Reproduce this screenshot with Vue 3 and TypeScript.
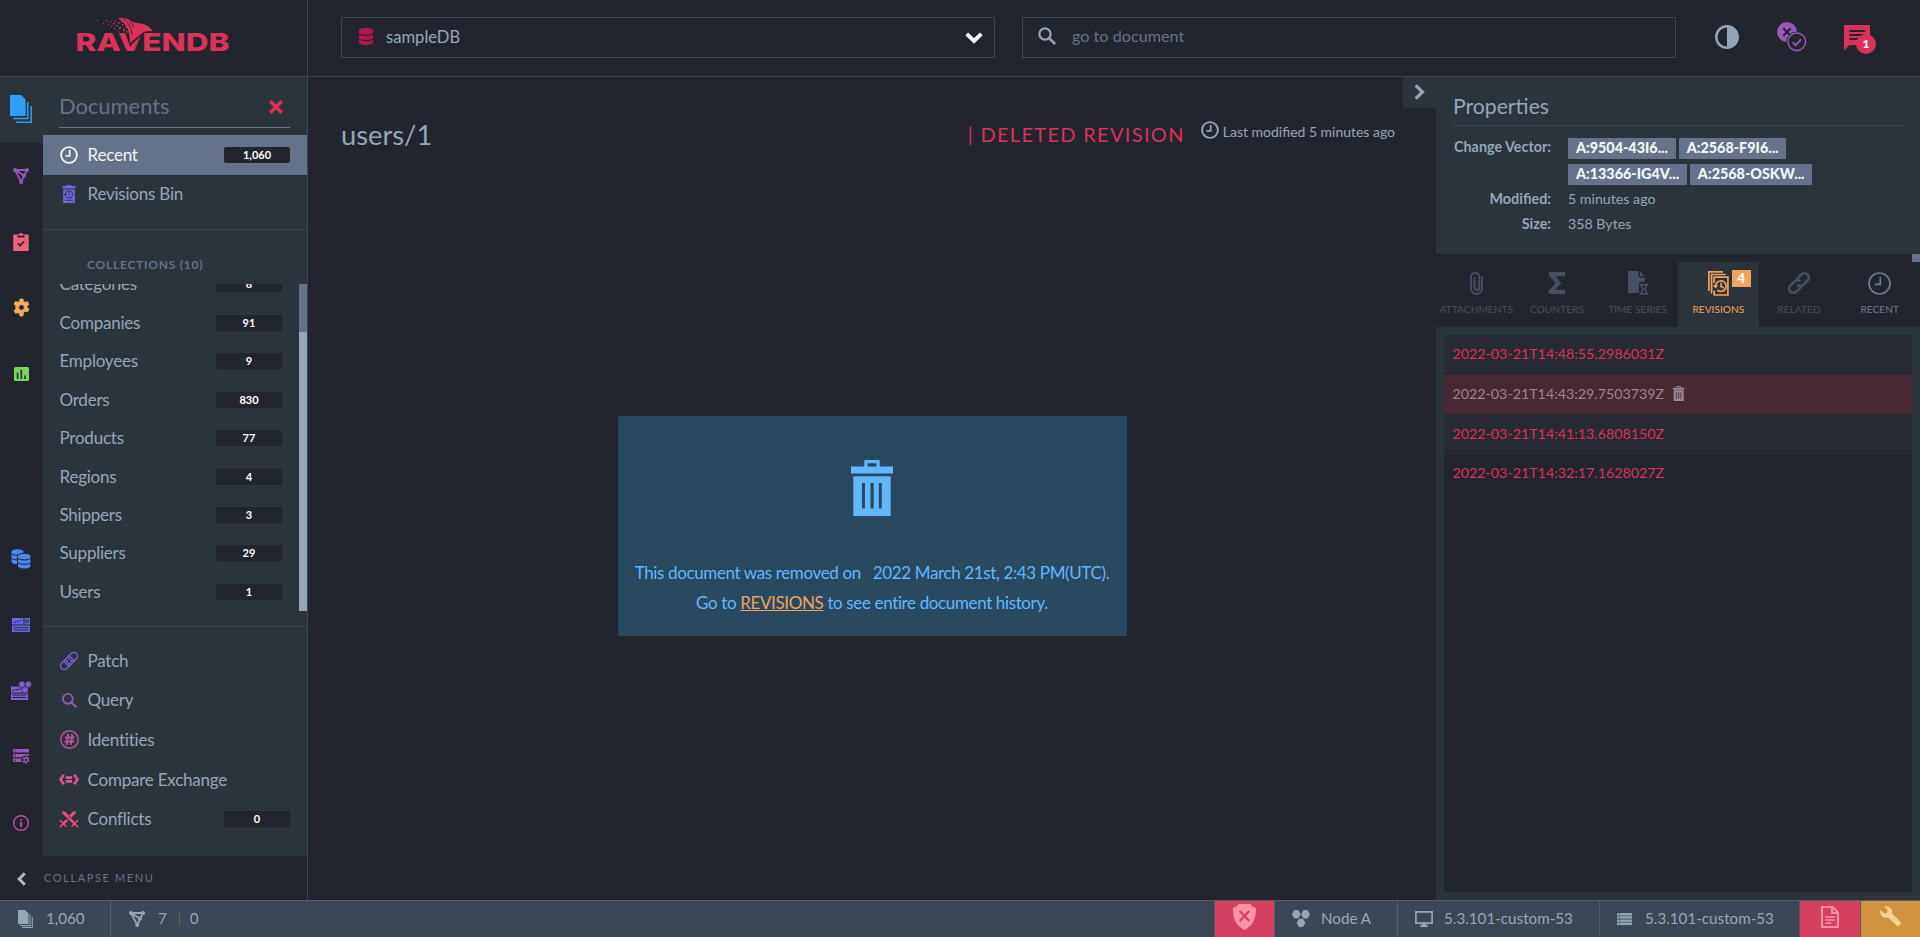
<script setup lang="ts">
import { h, type FunctionalComponent } from 'vue'

interface Glyph {
  w: number
  h: number
  body: string
}

const DARK = '#22252d'
const PANEL = '#2c343b'

const gearPath =
  'M7 0h3l.5 2.4 1.6.9 2.3-.8 1.6 2.7-1.8 1.6v1.9l1.8 1.6-1.6 2.7-2.3-.8-1.6.9L10 17H7l-.5-2.4-1.6-.9-2.3.8L1 11.800l1.800-1.600V6.800L1 5.200l1.600-2.700 2.300.8 1.600-.9zM8.500 5.700a2.800 2.800 0 1 0 0 5.600 2.800 2.800 0 0 0 0-5.600z'

const glyphs: Record<string, Glyph> = {
  docs: {
    w: 22, h: 28,
    body: '<path d="M0 0h11l4.600 4.600V21H0z"/><path fill="none" stroke="currentColor" stroke-width="1.500" d="M17.700 7v16.600H3.300M21.200 11v16.200H6.300"/>',
  },
  docsSmall: {
    w: 16, h: 18,
    body: '<path d="M1 0h7l3.500 3.500V14H1z"/><path fill="none" stroke="currentColor" stroke-width="1.100" d="M13 4.500v11H3M15.300 7v10.400H5"/>',
  },
  graph: {
    w: 16, h: 16,
    body: '<path fill="none" stroke="currentColor" stroke-width="1.800" d="M2 2h12L8.200 14zM2 2l9 5.500"/><circle cx="2" cy="2.100" r="2"/><circle cx="14" cy="2.100" r="2"/><circle cx="10.900" cy="7.500" r="2"/><circle cx="8.200" cy="13.900" r="2"/>',
  },
  clipboard: {
    w: 16, h: 18,
    body: `<path d="M.300 1.500h5A2.800 2.800 0 0 1 8 0a2.800 2.800 0 0 1 2.700 1.500h5V18H.300z"/><path fill="${DARK}" d="M4.500 2.500h7v2h-7z"/><path fill="none" stroke="${DARK}" stroke-width="1.600" d="M4.700 10.200l2.400 2.400 4.200-4.400"/><circle cx="8" cy="1.900" r="1"/>`,
  },
  gear: { w: 17, h: 17, body: `<path fill-rule="evenodd" stroke="currentColor" stroke-width=".800" d="${gearPath}"/>` },
  chart: {
    w: 15, h: 14,
    body: `<rect width="15" height="14" rx="1.500"/><path stroke="${PANEL}" stroke-width="1.700" d="M3.600 5.500V12M7.300 2.800V12M11 8.500V12"/>`,
  },
  databases: {
    w: 20, h: 20,
    body: `<path d="M.500 3C.500-.700 12.500-.700 12.500 3v9.500C12.500 16 .500 16 .500 12.500z"/><path fill="none" stroke="${DARK}" stroke-width="1" d="M.500 4.800c3 2 9 2 12 0M.500 9.300c3 2 9 2 12 0"/><path stroke="${DARK}" d="M6.500 7.500c0-4.400 13.500-4.400 13.500 0V17c0 4-13.500 4-13.500 0z"/><path fill="none" stroke="${DARK}" stroke-width="1" d="M6.500 9.400c3 2 10 2 13.500 0M6.500 13.800c3 2 10 2 13.500 0"/>`,
  },
  storage: {
    w: 18, h: 14,
    body: `<path d="M0 0h11.500v6.500H0zM12.500 0H18v6.500h-5.500zM0 7.600h18V14H0z"/><path fill="none" stroke="${DARK}" stroke-width=".900" d="M1.500 4.800l3-1.500 2 .7L10 1.500M1.500 9.700h15M1.500 12h15"/><circle cx="15.200" cy="3.200" r="1.500" fill="none" stroke="${DARK}"/>`,
  },
  cluster: {
    w: 21, h: 19,
    body: `<path d="M0 5.500h17V19H0z"/><path fill="none" stroke="${DARK}" stroke-width="1" d="M1 10l4-1.500 2 .5 3-1.700M0 12h17M1.500 14h14M1.500 16.500h14"/><g stroke="${DARK}" stroke-width=".700"><circle cx="11" cy="3.400" r="3.300"/><circle cx="17.300" cy="3.400" r="3.300"/><circle cx="14.100" cy="9" r="3.300"/></g>`,
  },
  serverGear: {
    w: 17, h: 15,
    body: `<path d="M0 0h16v3.500H0zM0 5h16v3.200H0zM0 9.600h9.500V13H0z"/><path fill="${DARK}" d="M1.500 1.200h1.200v1.200H1.500zM1.500 6h1.200v1.200H1.500zM1.500 10.700h1.200v1.200H1.500z"/><circle cx="13" cy="11" r="4.600" fill="${DARK}"/><g transform="translate(9.200 7.200) scale(.45)"><path fill-rule="evenodd" d="${gearPath}"/></g>`,
  },
  info: {
    w: 16, h: 16,
    body: '<circle cx="8" cy="8" r="7.300" fill="none" stroke="currentColor" stroke-width="1.400"/><path d="M7.100 7h1.800v5H7.100zM7.100 4h1.800v1.800H7.100z"/>',
  },
  close: { w: 14, h: 14, body: '<path fill="none" stroke="currentColor" stroke-width="3.600" d="M1.300 1.300l11.400 11.400M12.700 1.300L1.300 12.700"/>' },
  clock: {
    w: 18, h: 18,
    body: '<circle cx="9" cy="9" r="7.900" fill="none" stroke="currentColor" stroke-width="1.900"/><path fill="none" stroke="currentColor" stroke-width="1.700" d="M9.700 4v5.800H5.500"/>',
  },
  clockThin: {
    w: 23, h: 23,
    body: '<circle cx="11.500" cy="11.500" r="10.500" fill="none" stroke="currentColor" stroke-width="1.700"/><path fill="none" stroke="currentColor" stroke-width="1.700" d="M12.300 5v7.300H7"/>',
  },
  bin: {
    w: 14, h: 18,
    body: `<path d="M4.500 0h5v1h4v2.500H.500V1h4zM1.200 4.500h11.600V18H1.200z"/><circle cx="7" cy="9.500" r="3.700" fill="none" stroke="${PANEL}"/><path fill="none" stroke="${PANEL}" stroke-width=".900" d="M7 7.300v2.400l1.500 1M1.500 9.500h3M3 15.300h8"/>`,
  },
  patch: {
    w: 20, h: 20,
    body: '<g transform="rotate(-45 10 10)"><rect x="-.500" y="6.300" width="21" height="7.400" rx="3.700" fill="none" stroke="currentColor" stroke-width="1.400"/><path fill="none" stroke="currentColor" stroke-width="1.300" d="M6.300 6.300v7.400M13.700 6.300v7.400"/><path d="M7.300 7.600h2v2h-2zM10.700 7.600h2v2h-2zM7.300 10.700h2v2h-2zM10.700 10.700h2v2h-2z"/></g>',
  },
  search: {
    w: 18, h: 18,
    body: '<circle cx="7" cy="7" r="5.600" fill="none" stroke="currentColor" stroke-width="2.200"/><path stroke="currentColor" stroke-width="2.500" d="M11 11l6.200 6.200"/>',
  },
  query: {
    w: 15, h: 15,
    body: '<circle cx="5.800" cy="5.800" r="4.900" fill="none" stroke="currentColor" stroke-width="1.900"/><path stroke="currentColor" stroke-width="2.300" d="M9.300 9.300l5 5"/>',
  },
  hash: {
    w: 19, h: 19,
    body: '<circle cx="9.500" cy="9.500" r="8.700" fill="none" stroke="currentColor" stroke-width="1.500"/><path fill="none" stroke="currentColor" stroke-width="1.900" d="M8.200 4L6.700 15M12.300 4l-1.500 11M5 7.500h9.500M4.500 11.500H14"/>',
  },
  exchange: {
    w: 20, h: 11,
    body: '<path fill="none" stroke="currentColor" stroke-width="2.600" d="M4.800.800L1.500 5.500l3.300 4.700M15.200.800l3.300 4.700-3.300 4.700M6.800 3.600h6.400M6.800 7.400h6.400"/>',
  },
  swords: {
    w: 20, h: 17,
    body: '<path d="M3 0l3.200.800L16.500 12l-1.500 1.500L3.800 3zM17 0l-3.200.800L9.300 5.600l2 2L16.200 3zM7.200 8l-3.700 4L5 13.500 9 10z"/><path fill="none" stroke="currentColor" stroke-width="1.600" d="M1 9.300l6.500 6.500M19 9.300l-6.500 6.500M5 12L.800 16.300M15 12l4.200 4.300"/>',
  },
  left: { w: 9, h: 14, body: '<path fill="none" stroke="currentColor" stroke-width="3" d="M7.800 1.200L2.200 7l5.600 5.800"/>' },
  right: { w: 11, h: 16, body: '<path fill="none" stroke="currentColor" stroke-width="3.200" d="M1.700 1.300L8.500 8l-6.800 6.700"/>' },
  down: { w: 18, h: 12, body: '<path fill="none" stroke="currentColor" stroke-width="4" d="M1.700 1.800L9 9l7.300-7.200"/>' },
  database: {
    w: 14, h: 17,
    body: `<path d="M0 2.800C0-.900 14-.900 14 2.800v11.400c0 3.700-14 3.700-14 0z"/><path fill="none" stroke="${DARK}" stroke-width="1.100" d="M0 6c3 1.800 11 1.800 14 0M0 11.300c3 1.800 11 1.800 14 0"/>`,
  },
  contrast: {
    w: 24, h: 24,
    body: '<circle cx="12" cy="12" r="10.700" fill="none" stroke="currentColor" stroke-width="2.400"/><path d="M12 2a10 10 0 0 1 0 20z"/>',
  },
  status: {
    w: 30, h: 30,
    body: `<circle cx="10" cy="10" r="10"/><path fill="none" stroke="${DARK}" stroke-width="2" d="M6.300 6.300l7.400 7.400M13.700 6.300l-7.400 7.400"/><circle cx="19.800" cy="19.800" r="10.400" fill="${DARK}"/><circle cx="19.800" cy="19.800" r="8.800" fill="none" stroke="currentColor" stroke-width="1.500"/><path fill="none" stroke="currentColor" stroke-width="1.800" d="M15.600 20.200l3 3 5.400-5.800"/>`,
  },
  message: {
    w: 26, h: 26,
    body: `<path d="M0 0h26v20H5.500L0 25.500z"/><path stroke="${DARK}" stroke-width="2" d="M5.300 6h15.500M5.300 10h15.500M5.300 14h15.500"/>`,
  },
  trash: {
    w: 42, h: 56,
    body: '<path fill-rule="evenodd" d="M13.300 0h15.400v6.500H42v7H0v-7h13.300zM16.500 3.300v3.200h9V3.300zM2.300 16.200h37.400V56H2.300zM11 23v25.500h3V23zM19.500 23v25.500h3.200V23zM27.800 23v25.500h3V23z"/>',
  },
  clip: {
    w: 13, h: 24,
    body: '<path fill="none" stroke="currentColor" stroke-width="1.900" d="M12 5v12.500a5.500 5.500 0 0 1-11 0v-12a4.200 4.200 0 0 1 8.300 0v11.200a2.400 2.400 0 0 1-4.800 0V6"/>',
  },
  sigma: { w: 16, h: 22, body: '<path d="M0 0h16v4.200H6.500L12.300 11l-6 6.800H16V22H0v-3.500L6.500 11 0 3.500z"/>' },
  timeseries: {
    w: 20, h: 24,
    body: '<path d="M0 0h10.500v6.500h6.200V11H11v11H0zM12 0l4.700 5H12z"/><path fill="none" stroke="currentColor" stroke-width="1.700" d="M11.700 13.600H20M11.700 22.800H20M13.300 13.800c0 2.500 1.500 3 1.500 4.400s-1.500 2-1.500 4.400M18.500 13.800c0 2.500-1.500 3-1.500 4.400s1.500 2 1.500 4.400"/>',
  },
  revisions: {
    w: 21, h: 25,
    body: '<path fill="none" stroke="currentColor" stroke-width="1.700" d="M.900 20V.900H15M3.600 22.500V3.500H17.700"/><path fill="none" stroke="currentColor" stroke-width="1.700" d="M6.200 12V6.200H19.900V24H6.200v-4.500"/><path fill="none" stroke="currentColor" stroke-width="1.700" d="M7.600 15.500A5.300 5.300 0 1 1 9.300 19M13 11.800v3.600l2.800 1.600"/><path d="M4.700 14.300h5.600l-2.800 3.300z"/>',
  },
  link: {
    w: 22, h: 22,
    body: '<g transform="rotate(-45 11 11)" fill="none" stroke="currentColor" stroke-width="2.600"><path d="M10.500 15.300H3.200a4.300 4.300 0 0 1 0-8.600H9a4.300 4.300 0 0 1 4.300 4.300M11.500 6.700h7.300a4.300 4.300 0 0 1 0 8.600H13A4.300 4.300 0 0 1 8.700 11"/></g>',
  },
  shield: {
    w: 23, h: 26,
    body: '<path d="M5.500 0h12l1.500 2.500 4 1.300C23 14 21 21 11.500 26 2 21 0 14 0 3.800l4-1.300z"/><path fill="none" stroke="#d4405f" stroke-width="2" d="M6.700 7l9.600 10M16.300 7L6.700 17"/>',
  },
  node: {
    w: 18, h: 17,
    body: '<path stroke="currentColor" stroke-width="1" d="M2.400.600h3.800l2 3.700-2 3.700H2.400L.400 4.300zM11.600.600h3.800l2 3.700-2 3.700h-3.800l-2-3.700zM7.100 9.200h3.800l2 3.700-2 3.700H7.100l-2-3.700z"/>',
  },
  monitor: {
    w: 18, h: 16,
    body: '<path fill="none" stroke="currentColor" stroke-width="1.700" d="M.900.900h16.200v11.200H.900z"/><path d="M7 12.500h4v1.700h2V16H5v-1.800h2z"/>',
  },
  servers: {
    w: 15, h: 12,
    body: '<path d="M0 0h15v2.400H0zM0 3.200h15v2.400H0zM0 6.400h15v2.400H0zM0 9.600h15V12H0z"/><path stroke="#3c4654" stroke-width="1" d="M2.500 0v12" stroke-dasharray="1 2.200"/>',
  },
  report: {
    w: 18, h: 22,
    body: '<path fill="none" stroke="currentColor" stroke-width="2" d="M1 1h10.500L17 6.500V21H1zM11 1v6h6"/><path fill="none" stroke="currentColor" stroke-width="1.300" d="M4.300 11h9.500M4.300 14h9.500M4.300 17h6"/>',
  },
  wrench: {
    w: 22, h: 21,
    body: '<path d="M4.200.600A6 6 0 0 1 12 7.500l9.300 9.600-3.500 3.500L8.300 11.500A6 6 0 0 1 .500 4.200L4 7.300l3-.5.600-3z"/>',
  },
}

const Icon: FunctionalComponent<{ name: string; scale?: number }> = ({ name, scale = 1 }) => {
  const g = glyphs[name]
  return h('svg', {
    width: g.w * scale,
    height: g.h * scale,
    viewBox: `0 0 ${g.w} ${g.h}`,
    fill: 'currentColor',
    'aria-hidden': 'true',
    innerHTML: g.body,
  })
}
Icon.props = ['name', 'scale']

const railTop = [
  { icon: 'docs', tone: 'sky' },
  { icon: 'graph', tone: 'purple' },
  { icon: 'clipboard', tone: 'coral' },
  { icon: 'gear', tone: 'amber' },
  { icon: 'chart', tone: 'green' },
]
const railBottom = [
  { icon: 'databases', tone: 'blue' },
  { icon: 'storage', tone: 'indigo' },
  { icon: 'cluster', tone: 'violet' },
  { icon: 'serverGear', tone: 'purple' },
  { icon: 'info', tone: 'magenta' },
]

const collections = [
  { name: 'Categories', count: '8' },
  { name: 'Companies', count: '91' },
  { name: 'Employees', count: '9' },
  { name: 'Orders', count: '830' },
  { name: 'Products', count: '77' },
  { name: 'Regions', count: '4' },
  { name: 'Shippers', count: '3' },
  { name: 'Suppliers', count: '29' },
  { name: 'Users', count: '1' },
]

const tools = [
  { name: 'Patch', icon: 'patch', tone: 'violet', count: '' },
  { name: 'Query', icon: 'query', tone: 'purple', count: '' },
  { name: 'Identities', icon: 'hash', tone: 'magenta', count: '' },
  { name: 'Compare Exchange', icon: 'exchange', tone: 'pink', count: '' },
  { name: 'Conflicts', icon: 'swords', tone: 'rose', count: '0' },
]

const vector = ['A:9504-43I6...', 'A:2568-F9I6...', 'A:13366-IG4V...', 'A:2568-OSKW...']

const tabs = [
  { label: 'ATTACHMENTS', icon: 'clip', state: '' },
  { label: 'COUNTERS', icon: 'sigma', state: '' },
  { label: 'TIME SERIES', icon: 'timeseries', state: '' },
  { label: 'REVISIONS', icon: 'revisions', state: 'active', badge: '4' },
  { label: 'RELATED', icon: 'link', state: '' },
  { label: 'RECENT', icon: 'clockThin', state: 'enabled' },
]

const revisions = [
  { stamp: '2022-03-21T14:48:55.2986031Z', selected: false },
  { stamp: '2022-03-21T14:43:29.7503739Z', selected: true },
  { stamp: '2022-03-21T14:41:13.6808150Z', selected: false },
  { stamp: '2022-03-21T14:32:17.1628027Z', selected: false },
]

const specks = [
  [20, 2, 1], [26, 5, 1], [29, 2, 1.2], [33, 3, 1.2], [31, 6, 1], [36, 5, 1.5], [34, 8, 1], [38, 2.500, 1.200],
  [39, 7, 1.500], [41, 4, 1.600], [37, 10, 1.200], [42, 9, 1.800], [45, 6, 1.600], [46, 11, 1.800], [41, 12.500, 1], [48, 8.500, 1.500], [49, 13, 1.500], [44, 3, 1.300],
]
</script>

<template>
  <div class="studio">
    <header class="topbar">
      <div class="brand">
        <svg class="logo" width="156" height="38" viewBox="0 0 156 38" fill="#dc3158">
          <text x="-1.500" y="33" textLength="154" lengthAdjust="spacingAndGlyphs" class="wordmark">RAVENDB</text>
          <path fill="#22252d" d="M49 15l4 13 14-13 6-1H48z" />
          <path d="M41 .500c5-1 9 0 12 1.800 2.500 1.400 5 2.900 9 3 5.500.400 11 3.200 13.500 7.900-5-.7-9 .2-12 3.300l-10.500 8.800c.3-11-3-20-12-24.800z" />
          <path fill="none" stroke="#22252d" stroke-width=".900" d="M46 .500c5.500 4 8.500 9 9 16M52 2.500c2.500 2 4 4 5 7" />
          <rect v-for="([x, y, s], i) in specks" :key="i" :x="x" :y="y" :width="s" :height="s" />
        </svg>
      </div>
      <div class="topbar-main">
        <div class="db-select">
          <Icon name="database" class="db-icon" />
          <span class="db-name">sampleDB</span>
          <Icon name="down" class="caret" />
        </div>
        <div class="search">
          <Icon name="search" />
          <span>go to document</span>
        </div>
        <div class="actions">
          <Icon name="contrast" class="contrast" />
          <Icon name="status" class="tone-purple" />
          <div class="notify">
            <Icon name="message" />
            <span class="notify-count">1</span>
          </div>
        </div>
      </div>
    </header>

    <div class="body">
      <aside class="sidebar">
        <div class="sidebar-top">
          <nav class="rail">
            <div v-for="(r, i) in railTop" :key="r.icon" class="rail-item" :class="['tone-' + r.tone, { active: i === 0 }]">
              <Icon :name="r.icon" />
            </div>
            <div class="rail-gap"></div>
            <div v-for="r in railBottom" :key="r.icon" class="rail-item" :class="'tone-' + r.tone">
              <Icon :name="r.icon" />
            </div>
          </nav>
          <div class="menu">
            <div class="menu-title"><span>Documents</span><Icon name="close" /></div>
            <div class="menu-row selected">
              <span class="menu-icon"><Icon name="clock" /></span>
              <span class="label">Recent</span>
              <span class="count">1,060</span>
            </div>
            <div class="menu-row bin-row">
              <span class="menu-icon tone-indigo"><Icon name="bin" /></span>
              <span class="label">Revisions Bin</span>
            </div>
            <div class="section-title">COLLECTIONS (10)</div>
            <div class="collections">
              <div class="collection-list">
                <div v-for="c in collections" :key="c.name" class="collection">
                  <span class="label">{{ c.name }}</span>
                  <span class="count">{{ c.count }}</span>
                </div>
              </div>
              <div class="scrollbar"><div class="thumb"></div></div>
            </div>
            <div class="tools">
              <div v-for="t in tools" :key="t.name" class="menu-row">
                <span class="menu-icon" :class="'tone-' + t.tone"><Icon :name="t.icon" /></span>
                <span class="label">{{ t.name }}</span>
                <span v-if="t.count" class="count">{{ t.count }}</span>
              </div>
            </div>
          </div>
        </div>
        <div class="collapse"><span class="collapse-icon"><Icon name="left" /></span><span>COLLAPSE MENU</span></div>
      </aside>

      <main class="document">
        <div class="doc-head">
          <h1>users/1</h1>
          <span class="deleted">| DELETED REVISION</span>
          <Icon name="clock" class="mod-icon" />
          <span class="modified">Last modified 5 minutes ago</span>
        </div>
        <div class="stage">
          <div class="alert">
            <Icon name="trash" />
            <p class="first"><span>This document was removed on</span><span>2022 March 21st, 2:43 PM(UTC).</span></p>
            <p>Go to <a>REVISIONS</a> to see entire document history.</p>
          </div>
        </div>
        <div class="toggler"><Icon name="right" /></div>
      </main>

      <section class="side">
        <div class="props">
          <h2>Properties</h2>
          <div class="prop-grid">
            <b>Change Vector:</b>
            <div class="vector"><span v-for="v in vector" :key="v">{{ v }}</span></div>
            <b>Modified:</b>
            <div>5 minutes ago</div>
            <b>Size:</b>
            <div>358 Bytes</div>
          </div>
        </div>
        <div class="tabs">
          <div v-for="t in tabs" :key="t.label" class="tab" :class="t.state">
            <div class="tab-icon">
              <Icon :name="t.icon" />
              <span v-if="t.badge" class="tab-badge">{{ t.badge }}</span>
            </div>
            <span>{{ t.label }}</span>
          </div>
          <div class="tabs-thumb"></div>
        </div>
        <div class="rev-wrap">
          <div class="rev-list">
            <div v-for="r in revisions" :key="r.stamp" class="rev" :class="{ selected: r.selected }">
              <span>{{ r.stamp }}</span>
              <Icon v-if="r.selected" name="trash" :scale="0.27" />
            </div>
          </div>
        </div>
      </section>
    </div>

    <footer class="status">
      <div class="cell docs-cell"><Icon name="docsSmall" /><span>1,060</span></div>
      <div class="cell index-cell"><Icon name="graph" /><span>7</span><i></i><span>0</span></div>
      <div class="cell danger shield-cell"><Icon name="shield" /></div>
      <div class="cell node-cell"><Icon name="node" /><span>Node A</span></div>
      <div class="cell client-cell"><Icon name="monitor" /><span>5.3.101-custom-53</span></div>
      <div class="cell server-cell"><Icon name="servers" /><span>5.3.101-custom-53</span></div>
      <div class="cell danger report-cell"><Icon name="report" /></div>
      <div class="cell warn"><Icon name="wrench" /></div>
    </footer>
  </div>
</template>

<style>
body {
  margin: 0;
  background: #22252d;
}
</style>

<style scoped>
* {
  box-sizing: border-box;
}
svg {
  display: block;
  flex: none;
  overflow: visible;
}
.studio {
  display: flex;
  flex-direction: column;
  width: 1920px;
  height: 937px;
  overflow: hidden;
  background: #22252d;
  color: #96a6b8;
  font-family: Lato, 'Open Sans', sans-serif;
  font-size: 14px;
  white-space: nowrap;
}

.tone-sky { color: #2f9ef4; }
.tone-purple { color: #945ab5; }
.tone-coral { color: #f0627e; }
.tone-amber { color: #f0ad5c; }
.tone-green { color: #7bd560; }
.tone-blue { color: #4b87ee; }
.tone-indigo { color: #6d67e8; }
.tone-violet { color: #7d60d3; }
.tone-magenta { color: #b8529f; }
.tone-pink { color: #dd5596; }
.tone-rose { color: #ec4e7b; }

/* top bar */
.topbar {
  display: flex;
  flex: none;
  height: 77px;
  border-bottom: 1px solid #3c4654;
}
.brand {
  width: 308px;
  border-right: 1px solid #3c4654;
  padding: 18px 0 0 77px;
}
.wordmark {
  font-family: Inter, 'Open Sans', sans-serif;
  font-weight: 800;
  font-size: 25px;
}
.topbar-main {
  display: flex;
  flex: 1;
  align-items: flex-start;
  padding: 17px 0 0 33px;
}
.db-select,
.search {
  display: flex;
  align-items: center;
  width: 654px;
  height: 41px;
  border: 1px solid #3c4654;
}
.db-select {
  padding: 0 11px 0 17px;
  font-size: 16.6px;
}
.db-icon {
  color: #b5164f;
  margin-top: -3px;
}
.db-name {
  flex: 1;
  margin-left: 13px;
  margin-top: -2px;
}
.caret {
  color: #f2f5f8;
  margin-top: 1px;
}
.search {
  margin-left: 27px;
  padding-left: 15px;
  font-size: 16.200px;
}
.search svg {
  margin-top: -3px;
}
.search span {
  margin: -5px 0 0 16px;
  color: #66728a;
}
.actions {
  display: flex;
  align-items: flex-start;
  margin-left: 39px;
}
.contrast {
  margin-top: 8px;
  margin-right: 38px;
}
.actions > .tone-purple {
  margin-top: 5px;
  margin-right: 37px;
}
.notify {
  position: relative;
  margin-top: 8px;
  color: #dc3158;
}
.notify-count {
  position: absolute;
  left: 12px;
  top: 9px;
  width: 20px;
  height: 20px;
  border-radius: 50%;
  background: #dc3158;
  color: #fff;
  font-size: 12px;
  font-weight: 900;
  line-height: 19px;
  text-align: center;
}

.body {
  display: flex;
  flex: 1;
  min-height: 0;
}

/* sidebar */
.sidebar {
  display: flex;
  flex-direction: column;
  width: 308px;
  border-right: 1px solid #3c4654;
}
.sidebar-top {
  display: flex;
  height: 779px;
}
.rail {
  display: flex;
  flex-direction: column;
  width: 43px;
}
.rail-item {
  display: flex;
  align-items: center;
  justify-content: center;
  height: 66px;
  padding: 0 1px 1px 0;
}
.rail-item.active {
  background: #2c343b;
  padding: 0 2px 2px 0;
}
.rail-gap {
  flex: 1;
}
.menu {
  flex: 1;
  background: #2c343b;
}
.menu-title {
  display: flex;
  align-items: center;
  justify-content: space-between;
  height: 51px;
  margin: 0 17px 7px 16px;
  padding: 9px 7px 0 0;
  border-bottom: 1px solid #66728a;
  font-size: 21.9px;
  line-height: 24px;
  color: #66728a;
}
.menu-title span {
  margin-top: -2px;
}
.menu-title svg {
  color: #dc3158;
}
.menu-row {
  display: flex;
  align-items: center;
  height: 39.600px;
  padding: 0 17px 0 16px;
}
.menu-icon {
  display: flex;
  justify-content: center;
  width: 20px;
  margin-right: 8.500px;
}
.label {
  flex: 1;
  font-size: 17px;
  letter-spacing: -0.220px;
  line-height: 24px;
  margin-top: -1px;
}
.count {
  width: 66px;
  height: 16px;
  border-radius: 2px;
  background: #22252d;
  color: #fff;
  font-size: 11px;
  font-weight: 700;
  line-height: 16px;
  text-align: center;
}
.menu-row.selected {
  height: 40px;
  background: #66728a;
  color: #f0f3f7;
}
.bin-row {
  height: 55px;
  padding-bottom: 16px;
  border-bottom: 1px solid #3c4654;
}
.section-title {
  height: 54px;
  padding: 27px 0 0 44px;
  font-size: 12px;
  font-weight: 700;
  line-height: 15px;
  letter-spacing: 0.750px;
  color: #66728a;
}
.collections {
  display: flex;
  height: 327px;
  overflow: hidden;
}
.collection-list {
  display: flex;
  flex: 1;
  flex-direction: column;
  justify-content: flex-end;
}
.collection {
  display: flex;
  flex: none;
  align-items: center;
  height: 38.430px;
  padding: 0 17px 0 16.500px;
}
.collection .label {
  margin-top: 0;
}
.scrollbar {
  width: 8px;
  background: #96a6b8;
}
.thumb {
  height: 48px;
  background: #66728a;
}
.tools {
  height: 229px;
  margin-top: 15px;
  padding-top: 14px;
  border-top: 1px solid #3c4654;
}
.tools .label {
  margin-top: 0;
}
.collapse {
  display: flex;
  align-items: center;
  height: 44px;
  padding-top: 1px;
  font-size: 11px;
  letter-spacing: 1.600px;
  color: #66728a;
}
.collapse-icon {
  display: flex;
  width: 44px;
  padding-left: 17px;
  color: #a9b8c7;
}
.collapse span:last-child {
  margin-top: -3px;
}

/* document */
.document {
  position: relative;
  display: flex;
  flex-direction: column;
  width: 1128px;
}
.doc-head {
  display: flex;
  align-items: flex-start;
  height: 80px;
  padding: 40px 41px 0 33px;
}
.doc-head h1 {
  flex: 1;
  margin: 1px 0 0;
  font-size: 27.300px;
  font-weight: 400;
  line-height: 34px;
}
.deleted {
  margin: 3px 16px 0 0;
  font-size: 20px;
  letter-spacing: 1.320px;
  line-height: 28px;
  color: #dc3158;
}
.mod-icon {
  margin: 4px 4px 0 0;
}
.modified {
  margin-top: 5px;
  font-size: 13.980px;
  line-height: 20px;
}
.stage {
  display: flex;
  justify-content: center;
  padding: 259px 0 0 1px;
}
.alert {
  display: flex;
  flex-direction: column;
  align-items: center;
  width: 509px;
  height: 220px;
  border: 1px solid #2d4557;
  background: #294961;
  padding: 43px 1px 0 0;
  color: #62b7fb;
  font-size: 17px;
  letter-spacing: -0.370px;
  line-height: 30px;
}
.alert p {
  margin: 0;
}
.alert .first {
  display: flex;
  gap: 12px;
  margin-top: 42px;
}
.alert a {
  color: #f0a35e;
  text-decoration: underline;
}
.toggler {
  position: absolute;
  top: 0;
  right: 0;
  display: flex;
  width: 33px;
  height: 31px;
  padding: 7px 0 0 11px;
  background: #2c343b;
}

/* right column */
.side {
  display: flex;
  flex-direction: column;
  width: 484px;
}
.props {
  height: 177px;
  padding: 11px 16px 0 17px;
  background: #2c343b;
}
.props h2 {
  height: 38px;
  margin: 0;
  border-bottom: 1px solid #3c4654;
  font-size: 21.200px;
  font-weight: 400;
  line-height: 36px;
}
.prop-grid {
  display: grid;
  grid-template-columns: 98px 1fr;
  column-gap: 17px;
  padding-top: 12px;
  font-size: 14.200px;
  line-height: 25px;
}
.prop-grid b {
  height: 25px;
  font-size: 14.350px;
  line-height: 18px;
  text-align: right;
}
.prop-grid > div:not(.vector) {
  line-height: 18px;
}
.vector {
  display: flex;
  flex-wrap: wrap;
  align-content: flex-start;
  gap: 5px 3px;
  width: 250px;
  height: 52px;
}
.vector span {
  height: 21px;
  padding: 0 7.900px;
  border-radius: 1px;
  background: #66728a;
  color: #f4f7fa;
  font-size: 14.350px;
  font-weight: 900;
  line-height: 20px;
}
.tabs {
  position: relative;
  display: flex;
  height: 73px;
  padding-top: 8px;
}
.tabs-thumb {
  position: absolute;
  top: 0;
  right: 0;
  width: 8px;
  height: 8px;
  background: #66728a;
}
.tab {
  display: flex;
  flex: 1;
  flex-direction: column;
  align-items: center;
  color: #465060;
  font-size: 10.200px;
  line-height: 12px;
}
.tab.enabled {
  color: #6c7991;
}
.tab.active {
  background: #2c343b;
  color: #f0a35e;
}
.tab-icon {
  position: relative;
  display: flex;
  align-items: center;
  height: 24px;
  margin: 9px 0 8px;
}
.tab-badge {
  position: absolute;
  left: 24px;
  top: -1px;
  width: 19px;
  height: 17px;
  background: #f0a35e;
  color: #fff;
  font-size: 13px;
  font-weight: 900;
  line-height: 17px;
  text-align: center;
}
.rev-wrap {
  flex: 1;
  padding: 8px;
  background: #2c343b;
}
.rev-list {
  height: 100%;
  background: #22252d;
}
.rev {
  display: flex;
  align-items: center;
  gap: 9px;
  height: 39.700px;
  padding: 0 9px 2px 8.500px;
  color: #dc3158;
  font-size: 14.260px;
}
.rev:nth-child(odd) {
  background: #272a32;
}
.rev.selected {
  background: #472833;
  color: #9b8591;
}

/* status bar */
.status {
  display: flex;
  flex: none;
  height: 37px;
  border-top: 1px solid #545d6a;
  background: #3c4654;
  font-size: 15.200px;
}
.cell {
  display: flex;
  align-items: center;
  padding-bottom: 1px;
  border-right: 1px solid #545d6a;
}
.cell span {
  margin-top: -1px;
}
.docs-cell {
  width: 111px;
  padding-left: 17px;
  gap: 13px;
}
.index-cell {
  flex: 1;
  padding-left: 18px;
}
.index-cell span:first-of-type {
  margin-left: 13px;
}
.index-cell i {
  width: 1px;
  height: 14px;
  margin: 0 10px 0 12px;
  background: #59636f;
}
.danger {
  justify-content: center;
  background: #d4405f;
  color: #ff91a8;
}
.shield-cell {
  width: 60px;
  padding-bottom: 5px;
}
.node-cell {
  width: 123px;
  padding-left: 17px;
  gap: 11px;
}
.client-cell {
  width: 202px;
  padding-left: 17px;
  gap: 11px;
}
.server-cell {
  width: 200px;
  padding-left: 17px;
  gap: 13px;
}
.report-cell {
  width: 61px;
  padding-bottom: 5px;
}
.warn {
  justify-content: center;
  width: 59px;
  padding-bottom: 5px;
  border-right: 0;
  background: #d1923f;
  color: #ffd294;
}
</style>
